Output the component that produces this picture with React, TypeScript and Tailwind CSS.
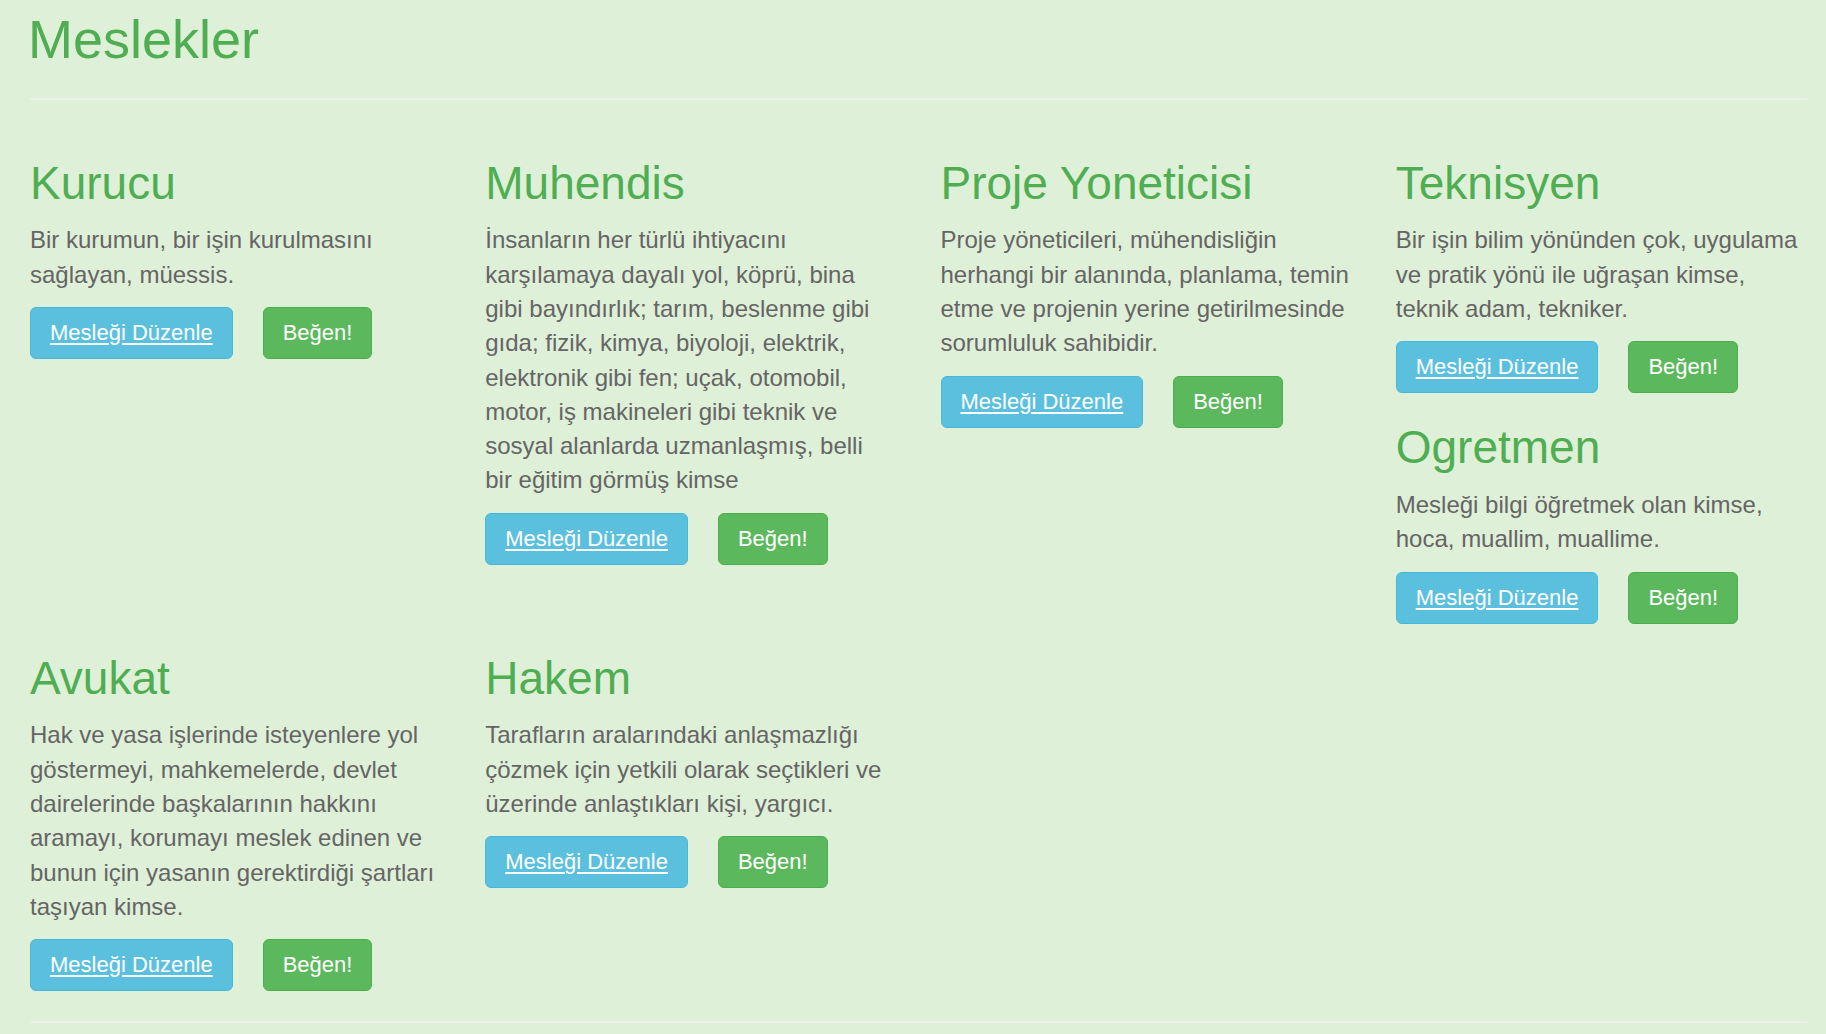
import React from "react";

interface Meslek {
  title: string;
  text: string;
}

const row1: Meslek[][] = [
  [
    {
      title: "Kurucu",
      text: "Bir kurumun, bir işin kurulmasını sağlayan, müessis.",
    },
  ],
  [
    {
      title: "Muhendis",
      text: "İnsanların her türlü ihtiyacını karşılamaya dayalı yol, köprü, bina gibi bayındırlık; tarım, beslenme gibi gıda; fizik, kimya, biyoloji, elektrik, elektronik gibi fen; uçak, otomobil, motor, iş makineleri gibi teknik ve sosyal alanlarda uzmanlaşmış, belli bir eğitim görmüş kimse",
    },
  ],
  [
    {
      title: "Proje Yoneticisi",
      text: "Proje yöneticileri, mühendisliğin herhangi bir alanında, planlama, temin etme ve projenin yerine getirilmesinde sorumluluk sahibidir.",
    },
  ],
  [
    {
      title: "Teknisyen",
      text: "Bir işin bilim yönünden çok, uygulama ve pratik yönü ile uğraşan kimse, teknik adam, tekniker.",
    },
    {
      title: "Ogretmen",
      text: "Mesleği bilgi öğretmek olan kimse, hoca, muallim, muallime.",
    },
  ],
];

const row2: Meslek[][] = [
  [
    {
      title: "Avukat",
      text: "Hak ve yasa işlerinde isteyenlere yol göstermeyi, mahkemelerde, devlet dairelerinde başkalarının hakkını aramayı, korumayı meslek edinen ve bunun için yasanın gerektirdiği şartları taşıyan kimse.",
    },
  ],
  [
    {
      title: "Hakem",
      text: "Tarafların aralarındaki anlaşmazlığı çözmek için yetkili olarak seçtikleri ve üzerinde anlaştıkları kişi, yargıcı.",
    },
  ],
];

function MeslekCard({ meslek }: { meslek: Meslek }) {
  return (
    <div>
      <h2 className="mt-[28px] mb-[14px] text-[46px] leading-[52.8px] text-[#4fae52]">
        {meslek.title}
      </h2>
      <p className="mb-[15px] text-[24px] leading-[34.29px] text-[#656565]">
        {meslek.text}
      </p>
      <div className="flex gap-[30px] text-[22px] leading-[32px] text-white">
        <button className="px-[19px] py-[9px] bg-[#5bc0de] border border-[#46b8da] rounded-[6px]">
          <span className="underline underline-offset-[3px]">Mesleği Düzenle</span>
        </button>
        <button className="px-[19px] py-[9px] bg-[#5cb85c] border border-[#4cae4c] rounded-[6px]">
          Beğen!
        </button>
      </div>
    </div>
  );
}

function MeslekRow({ columns }: { columns: Meslek[][] }) {
  return (
    <div className="grid grid-cols-4 -mx-[22px] items-start">
      {columns.map((col, i) => (
        <div key={i} className="pl-[22px] pr-[25px]">
          {col.map((m) => (
            <MeslekCard key={m.title} meslek={m} />
          ))}
        </div>
      ))}
    </div>
  );
}

export default function App() {
  return (
    <div
      className="min-h-screen bg-[#dff0d8] pl-[30px] pr-[19px] pt-[9px] pb-[12px]"
      style={{ fontFamily: '"Liberation Sans", Arial, Helvetica, sans-serif' }}
    >
      <h1 className="-ml-[2px] text-[54px] leading-[61.6px] text-[#4fae52]">
        Meslekler
      </h1>
      <hr className="mt-[27px] border-t-2 border-[#eeeeee]" />
      <div className="mt-[29px]">
        <MeslekRow columns={row1} />
        <MeslekRow columns={row2} />
      </div>
      <hr className="mt-[30px] border-t-2 border-[#eeeeee]" />
    </div>
  );
}
